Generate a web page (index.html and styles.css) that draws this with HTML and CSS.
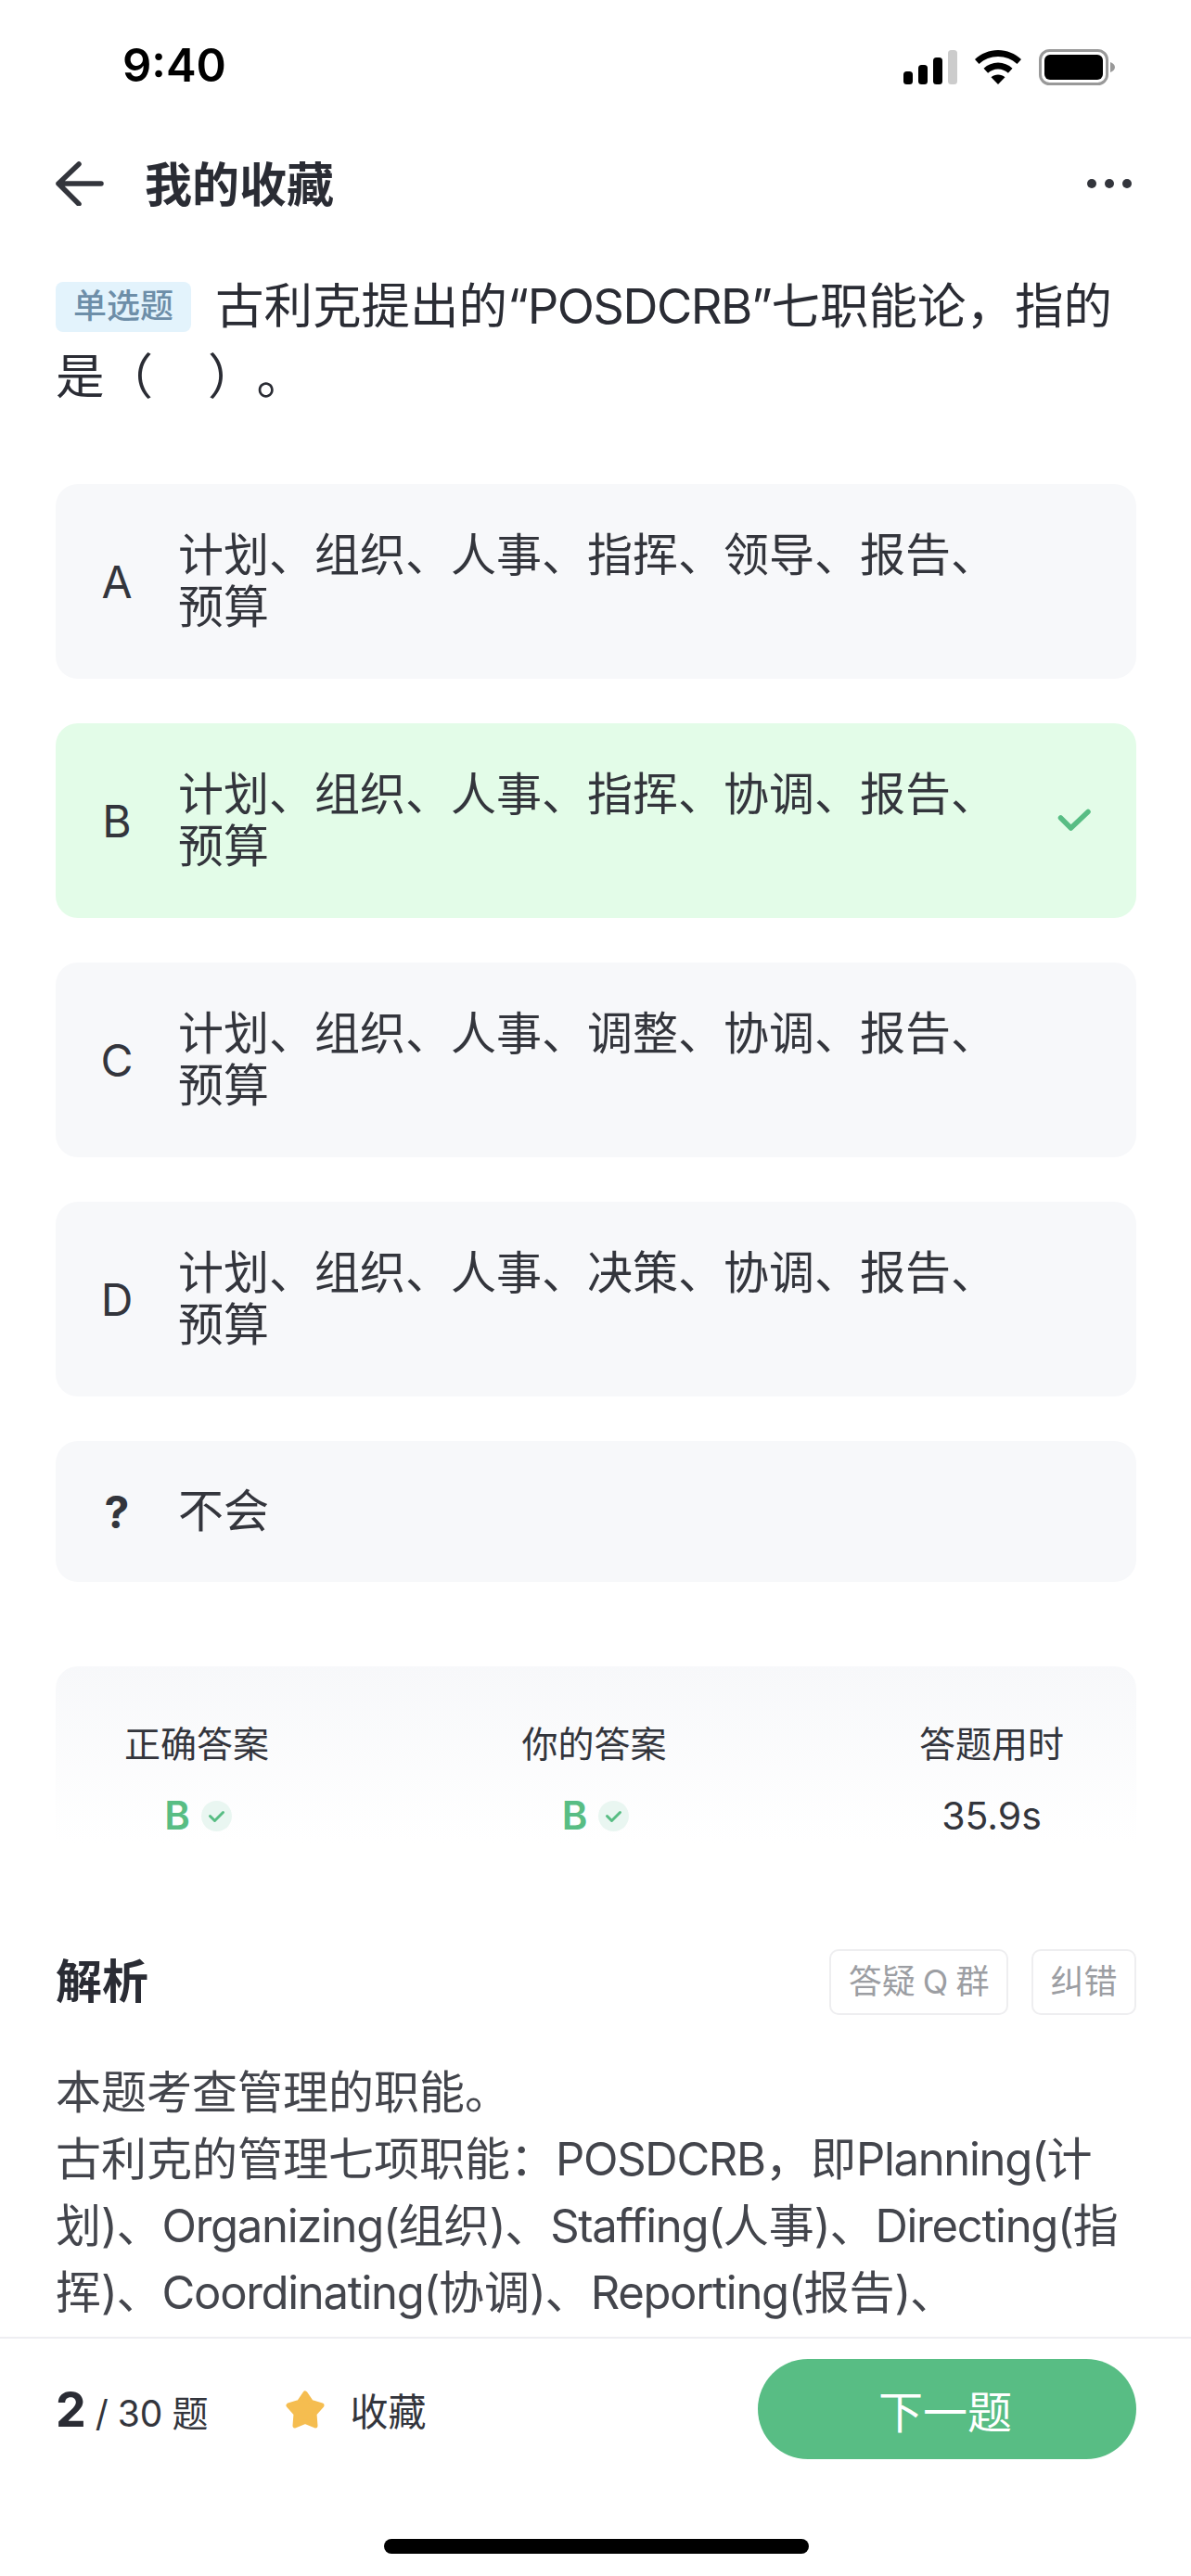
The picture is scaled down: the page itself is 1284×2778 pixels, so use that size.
FILE: index.html
```html
<!DOCTYPE html>
<html lang="zh-CN">
<head>
    <meta charset="UTF-8">
    <meta name="viewport" content="width=device-width, initial-scale=1.0">
    <title>我的收藏</title>
    <link rel="stylesheet" href="styles.css">
</head>
<body>
    <div class="page">
        <div class="status-bar">
            <span class="time">9:40</span>
            <div class="status-icons">
                <svg width="58" height="37" viewBox="0 0 58 37">
                    <rect x="0" y="23" width="10" height="14" rx="3.5"/>
                    <rect x="16" y="16" width="10" height="21" rx="3.5"/>
                    <rect x="32" y="8" width="10" height="29" rx="3.5"/>
                    <rect x="48" y="0" width="10" height="37" rx="3.5" fill="#cccccc"/>
                </svg>
                <svg width="50" height="37" viewBox="0 0 50 37">
                    <path d="M25 0C34.500 0 43.200 3.700 50 10L45.500 15C39.900 9.900 32.800 7 25 7C17.200 7 10.100 9.900 4.500 15L0 10C6.800 3.700 15.500 0 25 0Z"/>
                    <path d="M25 13.500C30.900 13.500 36.300 15.800 40.500 19.700L35.900 24.800C33 22.100 29.200 20.500 25 20.500C20.800 20.500 17 22.100 14.100 24.800L9.500 19.700C13.700 15.800 19.100 13.500 25 13.500Z"/>
                    <path d="M25 26.500C27.800 26.500 30.400 27.500 32.500 29.200L25 37L17.500 29.200C19.600 27.500 22.200 26.500 25 26.500Z"/>
                </svg>
                <svg width="82" height="39" viewBox="0 0 82 39">
                    <rect x="1.500" y="1.500" width="72" height="36" rx="10" fill="none" stroke="#999999" stroke-width="3"/>
                    <rect x="6" y="6" width="63" height="27" rx="6"/>
                    <path d="M77 14C80 15 82 17 82 19.500C82 22 80 24 77 25Z" fill="#999999"/>
                </svg>
            </div>
        </div>

        <div class="nav-bar">
            <svg class="back" width="52" height="48" viewBox="0 0 52 48">
                <path d="M49 24H3M25 3L3 24L25 46" fill="none" stroke="#33353c" stroke-width="5.500" stroke-linecap="round" stroke-linejoin="round"/>
            </svg>
            <h1>我的收藏</h1>
            <div class="more"><i></i><i></i><i></i></div>
        </div>

        <div class="main">
            <p class="question"><span class="tag">单选题</span>古利克提出的<span class="latin">“POSDCRB”</span>七职能论，指的<br>是（&nbsp;&nbsp;&nbsp;&nbsp;）。</p>

            <div class="options">
                <div class="option">
                    <span class="letter">A</span>
                    <span class="option-text">计划、组织、人事、指挥、领导、报告、预算</span>
                </div>
                <div class="option correct">
                    <span class="letter">B</span>
                    <span class="option-text">计划、组织、人事、指挥、协调、报告、预算</span>
                    <svg class="tick" width="38" height="28" viewBox="0 0 38 28">
                        <path d="M3.500 11L14.500 22L33 4.500" fill="none" stroke="#58bd84" stroke-width="5.500" stroke-linecap="round" stroke-linejoin="round"/>
                    </svg>
                </div>
                <div class="option">
                    <span class="letter">C</span>
                    <span class="option-text">计划、组织、人事、调整、协调、报告、预算</span>
                </div>
                <div class="option">
                    <span class="letter">D</span>
                    <span class="option-text">计划、组织、人事、决策、协调、报告、预算</span>
                </div>
                <div class="option short">
                    <span class="letter unknown">?</span>
                    <span class="option-text">不会</span>
                </div>
            </div>

            <div class="result">
                <div class="result-col">
                    <span class="result-label">正确答案</span>
                    <span class="result-value green">B
                        <svg width="33" height="33" viewBox="0 0 33 33">
                            <circle cx="16.500" cy="16.500" r="16.500" fill="#e9f6f1"/>
                            <path d="M9.500 16.500L14.500 21.500L23.500 12.500" fill="none" stroke="#58bd84" stroke-width="3" stroke-linecap="round" stroke-linejoin="round"/>
                        </svg>
                    </span>
                </div>
                <div class="result-col">
                    <span class="result-label">你的答案</span>
                    <span class="result-value green">B
                        <svg width="33" height="33" viewBox="0 0 33 33">
                            <circle cx="16.500" cy="16.500" r="16.500" fill="#e9f6f1"/>
                            <path d="M9.500 16.500L14.500 21.500L23.500 12.500" fill="none" stroke="#58bd84" stroke-width="3" stroke-linecap="round" stroke-linejoin="round"/>
                        </svg>
                    </span>
                </div>
                <div class="result-col">
                    <span class="result-label">答题用时</span>
                    <span class="result-value time-used">35.9s</span>
                </div>
            </div>

            <div class="analysis-head">
                <h2>解析</h2>
                <span class="small-btn first">答疑 Q 群</span>
                <span class="small-btn">纠错</span>
            </div>
            <p class="analysis">本题考查管理的职能。<br>古利克的管理七项职能：<span class="en">POSDCRB</span>，即<span class="en">Planning(</span>计<br>划<span class="en">)</span>、<span class="en">Organizing(</span>组织<span class="en">)</span>、<span class="en">Staffing(</span>人事<span class="en">)</span>、<span class="en">Directing(</span>指<br>挥<span class="en">)</span>、<span class="en">Coordinating(</span>协调<span class="en">)</span>、<span class="en">Reporting(</span>报告<span class="en">)</span>、</p>
        </div>

        <div class="footer">
            <div class="footer-row">
                <span class="count"><b>2</b> / 30 题</span>
                <svg class="star" width="42" height="41" viewBox="0 0 42 41">
                    <path d="M21 3L27.500 12.500L39 16L31 25L32 38L21 33.500L10 38L11 25L3 16L14.500 12.500Z" fill="#f5bd50" stroke="#f5bd50" stroke-width="5" stroke-linejoin="round"/>
                </svg>
                <span class="fav">收藏</span>
                <button class="next">下一题</button>
            </div>
            <div class="home-bar"></div>
        </div>
    </div>
</body>
</html>
```

FILE: styles.css
```css
* {
    box-sizing: border-box;
}

body {
    margin: 0;
    background: #ffffff;
    font-family: Inter, 'Noto Sans CJK SC', sans-serif;
    color: #33353c;
    text-spacing-trim: space-all;
}

.page {
    width: 1284px;
    height: 2778px;
    display: flex;
    flex-direction: column;
    overflow: hidden;
}

.status-bar {
    height: 150px;
    padding: 43px 82px 0 132px;
    display: flex;
    justify-content: space-between;
    align-items: flex-start;
}

.time {
    font-size: 49px;
    line-height: 56px;
    font-weight: 600;
    color: #000000;
}

.status-icons {
    display: flex;
    align-items: center;
    gap: 19px;
    margin-top: 10px;
}

.nav-bar {
    height: 96px;
    padding: 0 64px 0 60px;
    display: flex;
    align-items: center;
}

.back {
    margin-right: 44px;
}

h1 {
    margin: 0 0 5px;
    flex: 1;
    font-size: 51px;
    font-weight: 700;
    color: #2a2c34;
}

.more {
    display: flex;
    gap: 9px;
}

.more i {
    width: 10px;
    height: 10px;
    border-radius: 50%;
    background: #33353c;
}

.main {
    flex: 1;
    min-height: 0;
    overflow: hidden;
    padding: 46px 59px 0 60px;
}

.question {
    margin: 0;
    font-size: 52.500px;
    line-height: 76px;
    color: #2a2c34;
}

.latin {
    letter-spacing: -1.500px;
}

.tag {
    display: inline-block;
    width: 146px;
    height: 54px;
    margin-right: 26px;
    border-radius: 8px;
    background: #e3f3fc;
    color: #6d8ea8;
    font-size: 36px;
    font-weight: 500;
    line-height: 52px;
    text-align: center;
    vertical-align: 6px;
}

.options {
    margin-top: 78px;
    display: flex;
    flex-direction: column;
    gap: 48px;
}

.option {
    height: 210px;
    padding: 0 48px 0 47px;
    border-radius: 24px;
    background: #f7f8fa;
    display: flex;
    align-items: center;
}

.option.correct {
    background: #e3fce8;
}

.option.short {
    height: 152px;
}

.letter {
    width: 38px;
    margin-right: 47px;
    flex-shrink: 0;
    font-size: 48px;
    text-align: center;
}

.letter.unknown {
    font-weight: 700;
}

.option-text {
    width: 900px;
    font-size: 49px;
    line-height: 56px;
}

.tick {
    margin-left: auto;
    margin-right: -1px;
}

.result {
    margin-top: 91px;
    height: 190px;
    padding: 54px 78px 0 74px;
    border-radius: 24px 24px 0 0;
    background: linear-gradient(#f7f8fa, #ffffff);
    display: flex;
    justify-content: space-between;
}

.result-col {
    width: 156px;
    display: flex;
    flex-direction: column;
    align-items: center;
}

.result-label {
    font-size: 39px;
    line-height: 60px;
    white-space: nowrap;
}

.result-value {
    margin-top: 23px;
    display: flex;
    align-items: center;
    gap: 12px;
    font-size: 39px;
    line-height: 48px;
}

.result-value.time-used {
    font-size: 41px;
}

.result-value.green {
    margin-left: 3px;
    color: #58bd84;
    font-weight: 600;
    font-size: 42px;
}

.analysis-head {
    margin-top: 115px;
    display: flex;
    align-items: center;
}

h2 {
    margin: 0 0 2px;
    flex: 1;
    font-size: 50px;
    line-height: 60px;
    font-weight: 700;
    color: #2a2c34;
}

.small-btn {
    height: 71px;
    padding: 0 18.500px;
    border: 2px solid #eeeef0;
    border-radius: 10px;
    color: #9c9ea3;
    font-size: 36px;
    line-height: 67px;
    word-spacing: -2px;
}

.small-btn.first {
    margin-right: 25px;
}

.analysis {
    margin: 48px 0 0;
    font-size: 49px;
    line-height: 72px;
    color: #43454c;
    white-space: nowrap;
}

.en {
    letter-spacing: -1.300px;
}

.footer {
    height: 258px;
    border-top: 2px solid #eeeef2;
    padding: 22px 59px 0 60px;
    background: #ffffff;
}

.footer-row {
    display: flex;
    align-items: center;
    height: 108px;
}

.count {
    font-size: 39px;
    word-spacing: -1px;
    margin-right: 84px;
}

.count b {
    font-size: 52px;
    font-weight: 700;
    color: #2a2c34;
}

.star {
    margin-right: 27px;
}

.fav {
    font-size: 41px;
}

.next {
    margin-left: auto;
    width: 408px;
    height: 108px;
    padding: 0 4px 0 0;
    border: none;
    border-radius: 54px;
    background: #58bd84;
    color: #ffffff;
    font-family: inherit;
    font-size: 48px;
}

.home-bar {
    width: 458px;
    height: 16px;
    margin: 86px 0 0 354px;
    border-radius: 8px;
    background: #000000;
}
```
